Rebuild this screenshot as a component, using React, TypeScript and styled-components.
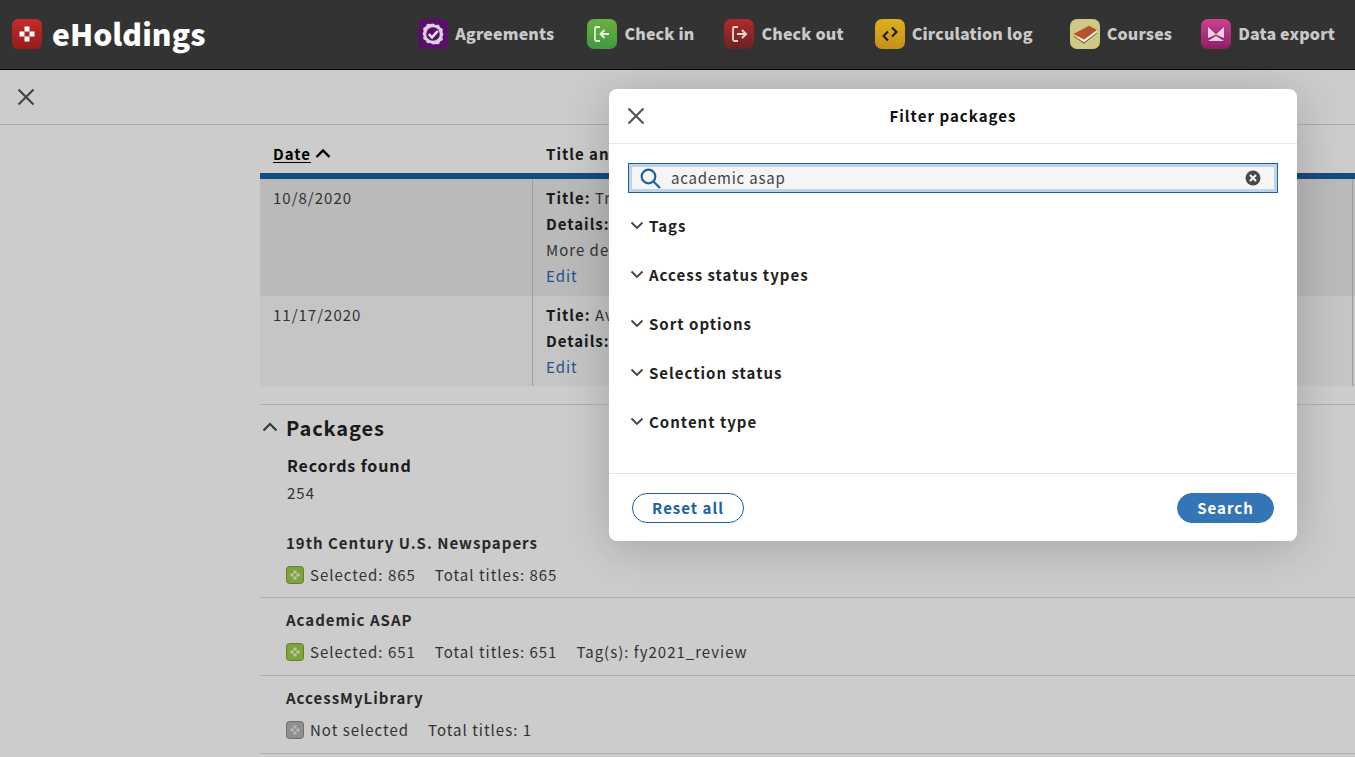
import React from "react";
import styled, { createGlobalStyle } from "styled-components";

const Global = createGlobalStyle`
  html, body { margin: 0; padding: 0; height: 100%; background: #fff; overflow: hidden; }
  body { font-family: "Noto Sans CJK JP", "Noto Sans", sans-serif; color: #333; }
  * { box-sizing: border-box; }
`;

const Screen = styled.div`
  position: relative;
  width: 1355px;
  height: 757px;
  overflow: hidden;
`;

const Header = styled.header`
  height: 70px;
  background: #333;
  border-bottom: 1px solid #000;
  display: flex;
  align-items: center;
  padding: 0 20px 1px 12px;
`;
const Brand = styled.div`
  display: flex;
  align-items: center;
  gap: 10px;
  color: #fff;
  font-weight: 900;
  font-size: 30px;
  letter-spacing: 0.05px;
  margin-right: auto;
  line-height: 30px;
`;
const BrandText = styled.span`
  position: relative;
  top: -1px;
`;
const Nav = styled.nav`
  display: flex;
  align-items: center;
`;
const NavItem = styled.div<{ $ml: number }>`
  display: flex;
  align-items: center;
  gap: 7px;
  margin-left: ${(p) => p.$ml}px;
  color: #c9c9c9;
  font-weight: 900;
  font-size: 16px;
  line-height: 30px;
  letter-spacing: 0.15px;
  white-space: nowrap;
`;
const NavLabel = styled.span`
  position: relative;
  top: -1px;
`;
const AppIcon = styled.svg`
  width: 30px;
  height: 30px;
  display: block;
  flex: none;
`;

const Page = styled.main`
  height: 687px;
`;
const PaneBar = styled.div`
  height: 55px;
  border-bottom: 1px solid #d8d8d8;
  display: flex;
  align-items: center;
  padding-left: 16px;
  padding-bottom: 1px;
`;
const Content = styled.div`
  padding-left: 260px;
`;
const TableHead = styled.div`
  display: grid;
  grid-template-columns: 273px 1fr;
  height: 54px;
  border-bottom: 6px solid #195f9f;
  align-items: center;
  font-weight: 700;
  font-size: 15px;
  letter-spacing: 1px;
  color: #222;
`;
const HeadCell = styled.div`
  display: flex;
  align-items: center;
  gap: 4px;
  padding-left: 13px;
  padding-top: 8px;
`;
const Sorted = styled.span`
  text-decoration: underline;
  text-underline-offset: 2px;
  color: #000;
`;
const Row = styled.div<{ $dark?: boolean; $pad: number }>`
  display: grid;
  grid-template-columns: 272px 1fr;
  background: ${(p) => (p.$dark ? "#e9e9e9" : "#f7f7f7")};
  font-size: 15px;
  line-height: 26px;
  letter-spacing: 1px;
  color: #3f3f3f;
  > div { padding: 6px 0 ${(p) => p.$pad}px 13px; }
`;
const DetailCell = styled.div`
  border-left: 1px solid #c4c4c4;
  border-right: 1px solid #c4c4c4;
  margin-right: 2px;
`;
const Line = styled.div``;
const Strong = styled.b`
  color: #222;
`;
const EditLink = styled.a`
  color: #2f6aa8;
  display: block;
`;

const Section = styled.section`
  margin-top: 18px;
  border-top: 1px solid #dcdcdc;
`;
const SectionTitle = styled.h2`
  margin: 0;
  display: flex;
  align-items: center;
  gap: 8px;
  height: 46px;
  padding: 0 0 2px 2px;
  font-size: 20px;
  font-weight: 700;
  letter-spacing: 0.9px;
  color: #222;
`;
const Records = styled.div`
  padding-left: 27px;
  font-size: 15px;
  letter-spacing: 1px;
  line-height: 27px;
  margin-top: 1px;
  color: #3f3f3f;
  b { display: block; font-size: 16px; letter-spacing: 0.88px; color: #222; }
`;
const PackageItem = styled.div`
  padding-left: 26px;
  height: 78px;
  border-bottom: 1px solid #dcdcdc;
  padding-top: 11px;
  letter-spacing: 1px;
  &:first-child { height: 77px; }
`;
const PackageList = styled.div`
  margin-top: 15px;
`;
const PackageName = styled.div`
  font-size: 15px;
  font-weight: 700;
  line-height: 22px;
  color: #333;
`;
const Meta = styled.div`
  display: flex;
  align-items: center;
  margin-top: 10px;
  font-size: 15px;
  line-height: 22px;
  color: #3f3f3f;
`;
const MetaText = styled.span`
  margin-left: 19px;
  &:first-of-type { margin-left: 6px; }
`;
const StatusIcon = styled.svg`
  width: 18px;
  height: 18px;
  display: block;
  flex: none;
`;

const Overlay = styled.div`
  position: absolute;
  left: 0;
  right: 0;
  top: 70px;
  bottom: 0;
  background: rgba(0, 0, 0, 0.2);
`;
const Modal = styled.div`
  position: absolute;
  left: 609px;
  top: 89px;
  width: 688px;
  height: 452px;
  background: #fff;
  border-radius: 8px;
  box-shadow: 0 6px 48px rgba(0, 0, 0, 0.2);
  display: flex;
  flex-direction: column;
`;
const ModalHead = styled.div`
  position: relative;
  height: 55px;
  flex: none;
  border-bottom: 1px solid #e5e5e5;
  display: flex;
  align-items: center;
  justify-content: center;
  padding-bottom: 2px;
  font-size: 15px;
  font-weight: 700;
  letter-spacing: 1.04px;
  color: #111;
`;
const ModalClose = styled.svg`
  position: absolute;
  left: 17px;
  top: 17px;
  width: 20px;
  height: 20px;
`;
const ModalBody = styled.div`
  flex: 1;
  padding: 19px 19px 0;
`;
const SearchBox = styled.div`
  height: 30px;
  border: 1px solid #1960a4;
  box-shadow: inset 0 0 0 3px #bdd3e8;
  background: #f5f5f5;
  display: flex;
  align-items: center;
  padding: 0 16px 0 11px;
  font-size: 15px;
  letter-spacing: 0.8px;
  color: #444;
`;
const SearchValue = styled.span`
  flex: 1;
  margin-left: 10px;
  position: relative;
  top: -1px;
`;
const Accordion = styled.div`
  margin-top: 9px;
`;
const AccordionRow = styled.div`
  height: 48.8px;
  display: flex;
  align-items: center;
  gap: 5px;
  padding-left: 2px;
  padding-bottom: 1px;
  font-size: 15px;
  font-weight: 700;
  letter-spacing: 1px;
  color: #222;
`;
const ModalFoot = styled.div`
  height: 68px;
  flex: none;
  border-top: 1px solid #e5e5e5;
  display: flex;
  align-items: flex-start;
  justify-content: space-between;
  padding: 19px 23px 0;
`;
const Pill = styled.button<{ $primary?: boolean }>`
  height: 30px;
  width: ${(p) => (p.$primary ? 97 : 112)}px;
  border-radius: 15px;
  border: 1px solid ${(p) => (p.$primary ? "#3476b5" : "#1960a4")};
  background: ${(p) => (p.$primary ? "#3476b5" : "#fff")};
  color: ${(p) => (p.$primary ? "#fff" : "#1960a4")};
  font-family: inherit;
  font-size: 15px;
  font-weight: 700;
  letter-spacing: 1px;
  padding: 0 0 2px;
  line-height: 1;
`;

const X = () => (
  <svg width="20" height="20" viewBox="0 0 20 20" fill="none" stroke="#555" strokeWidth="2.2">
    <path d="M2.500 2.500 17.500 17.500M17.500 2.500 2.500 17.500" />
  </svg>
);
const Chevron = () => (
  <svg width="14" height="9" viewBox="0 0 14 9" fill="none" stroke="#444" strokeWidth="1.8">
    <path d="M1.500 1.500 7 7l5.500-5.500" />
  </svg>
);
const BigChevron = () => (
  <svg width="16" height="10" viewBox="0 0 16 10" fill="none" stroke="#444" strokeWidth="2">
    <path d="M1.500 8.500 8 2l6.500 6.500" />
  </svg>
);
const Gradients = () => (
  <svg width="0" height="0" style={{ position: "absolute" }}>
    <defs>
      <linearGradient id="gRed" x1="0" y1="0" x2="0" y2="1"><stop offset="0" stopColor="#c62a2a" /><stop offset="1" stopColor="#961c1c" /></linearGradient>
      <linearGradient id="gGreen" x1="0" y1="0" x2="0" y2="1"><stop offset="0" stopColor="#6cb03f" /><stop offset="1" stopColor="#3f9a3f" /></linearGradient>
      <linearGradient id="gOut" x1="0" y1="0" x2="0" y2="1"><stop offset="0" stopColor="#b02a2a" /><stop offset="1" stopColor="#6e2222" /></linearGradient>
      <linearGradient id="gAmber" x1="0" y1="0" x2="0" y2="1"><stop offset="0" stopColor="#dbb020" /><stop offset="1" stopColor="#c88f1a" /></linearGradient>
      <linearGradient id="gPink" x1="0" y1="0" x2="0" y2="1"><stop offset="0" stopColor="#cb428f" /><stop offset="1" stopColor="#8f1e66" /></linearGradient>
    </defs>
  </svg>
);
const Logo = () => (
  <AppIcon viewBox="0 0 30 30">
    <rect width="30" height="30" rx="6" fill="url(#gRed)" />
    <g fill="#fff">
      <rect x="12.500" y="7.500" width="5" height="5" />
      <rect x="7.500" y="12.500" width="5" height="5" />
      <rect x="17.500" y="12.500" width="5" height="5" />
      <rect x="12.500" y="17.500" width="5" height="5" />
    </g>
  </AppIcon>
);
const Agreements = () => (
  <AppIcon viewBox="0 0 30 30">
    <rect width="30" height="30" rx="6" fill="#5a0f68" />
    <path d="M15 4.500l2.700 1.600 3.100-.4 1.400 2.800 2.700 1.600-.5 3.100L25.500 15l-1.100 2.800.5 3.100-2.700 1.600-1.400 2.800-3.100-.4L15 25.500l-2.700-1.600-3.100.4-1.400-2.800-2.700-1.600.5-3.100L4.500 15l1.100-2.800-.5-3.100 2.700-1.600 1.400-2.800 3.100.4z" fill="#dccfe0" />
    <circle cx="15" cy="15" r="6.800" fill="#5a0f68" />
    <path d="M10.800 15.200l3.200 3.200 5.800-6.400" fill="none" stroke="#f2ecf3" strokeWidth="2.400" />
  </AppIcon>
);
const CheckIn = () => (
  <AppIcon viewBox="0 0 30 30">
    <rect width="30" height="30" rx="7" fill="url(#gGreen)" />
    <path d="M13 8H9.500Q8 8 8 9.500v11Q8 22 9.500 22H13" fill="none" stroke="#e5efdf" strokeWidth="1.800" />
    <path d="M22 15h-8M17.500 11l-4 4 4 4" fill="none" stroke="#e5efdf" strokeWidth="2" />
  </AppIcon>
);
const CheckOut = () => (
  <AppIcon viewBox="0 0 30 30">
    <rect width="30" height="30" rx="7" fill="url(#gOut)" />
    <path d="M14 8h-3.500Q9 8 9 9.500v11Q9 22 10.500 22H14" fill="none" stroke="#e8d6d6" strokeWidth="1.800" />
    <path d="M13 15h9M18 11l4 4-4 4" fill="none" stroke="#e8d6d6" strokeWidth="2" />
  </AppIcon>
);
const Circ = () => (
  <AppIcon viewBox="0 0 30 30">
    <rect width="30" height="30" rx="7" fill="url(#gAmber)" />
    <path d="M13 12.500 8.500 17l4.500 4.500M17 8.500l4.500 4.500-4.500 4.500" fill="none" stroke="#1c1608" strokeWidth="2" />
  </AppIcon>
);
const Courses = () => (
  <AppIcon viewBox="0 0 30 30">
    <rect width="30" height="30" rx="7" fill="#cfc985" />
    <path d="M3.500 16 14 23.300l13-9.800V11L14 20z" fill="#f3efe0" />
    <path d="M3.500 15 19 6.700l8 4.300-13 9.500z" fill="#b5532b" />
    <path d="M3.500 16.500 14 23.600l13-10v1L14 24.800 3.500 17.500z" fill="#7d5a46" />
  </AppIcon>
);
const DataExport = () => (
  <AppIcon viewBox="0 0 30 30">
    <rect width="30" height="30" rx="7" fill="url(#gPink)" />
    <path d="M7 8l8 7.500L23 8v11l-8-3.500L7 19z" fill="#ecd3e2" />
    <path d="M7 22l8-5 8 5z" fill="#ecd3e2" />
  </AppIcon>
);
const Status = ({ on }: { on?: boolean }) => (
  <StatusIcon viewBox="0 0 18 18">
    <rect x=".5" y=".5" width="17" height="17" rx="3" fill={on ? "#9ecc49" : "#b3b3b3"} stroke={on ? "#77a330" : "#8c8c8c"} />
    <g fill={on ? "#f0f7df" : "#e6e6e6"}>
      <rect x="7.500" y="4.500" width="3" height="3" />
      <rect x="4.500" y="7.500" width="3" height="3" />
      <rect x="10.500" y="7.500" width="3" height="3" />
      <rect x="7.500" y="10.500" width="3" height="3" />
    </g>
  </StatusIcon>
);

const navItems: { label: string; ml: number; icon: React.ReactNode }[] = [
  { label: "Agreements", ml: 0, icon: <Agreements /> },
  { label: "Check in", ml: 33, icon: <CheckIn /> },
  { label: "Check out", ml: 30, icon: <CheckOut /> },
  { label: "Circulation log", ml: 31, icon: <Circ /> },
  { label: "Courses", ml: 37, icon: <Courses /> },
  { label: "Data export", ml: 29, icon: <DataExport /> },
];
const packages = [
  { name: "19th Century U.S. Newspapers", on: true, parts: ["Selected: 865", "Total titles: 865"] },
  { name: "Academic ASAP", on: true, parts: ["Selected: 651", "Total titles: 651", "Tag(s): fy2021_review"] },
  { name: "AccessMyLibrary", on: false, parts: ["Not selected", "Total titles: 1"] },
];
const filters = ["Tags", "Access status types", "Sort options", "Selection status", "Content type"];

export default function App() {
  return (
    <Screen>
      <Global />
      <Gradients />
      <Header>
        <Brand>
          <Logo />
          <BrandText>eHoldings</BrandText>
        </Brand>
        <Nav>
          {navItems.map((n) => (
            <NavItem key={n.label} $ml={n.ml}>
              {n.icon}
              <NavLabel>{n.label}</NavLabel>
            </NavItem>
          ))}
        </Nav>
      </Header>
      <Page>
        <PaneBar>
          <X />
        </PaneBar>
        <Content>
          <TableHead>
            <HeadCell>
              <Sorted>Date</Sorted>
              <svg width="16" height="11" viewBox="0 0 16 11" fill="none" stroke="#000" strokeWidth="2.400">
                <path d="M1.500 9 8 2.500 14.500 9" />
              </svg>
            </HeadCell>
            <HeadCell>Title and</HeadCell>
          </TableHead>
          <Row $dark $pad={7}>
            <Line>10/8/2020</Line>
            <DetailCell>
              <Line><Strong>Title:</Strong> Trial</Line>
              <Line><Strong>Details:</Strong></Line>
              <Line>More details</Line>
              <EditLink>Edit</EditLink>
            </DetailCell>
          </Row>
          <Row $pad={6}>
            <Line>11/17/2020</Line>
            <DetailCell>
              <Line><Strong>Title:</Strong> Avail</Line>
              <Line><Strong>Details:</Strong></Line>
              <EditLink>Edit</EditLink>
            </DetailCell>
          </Row>
          <Section>
            <SectionTitle>
              <BigChevron />
              Packages
            </SectionTitle>
            <Records>
              <b>Records found</b>
              254
            </Records>
            <PackageList>
              {packages.map((p) => (
                <PackageItem key={p.name}>
                  <PackageName>{p.name}</PackageName>
                  <Meta>
                    <Status on={p.on} />
                    {p.parts.map((t) => (
                      <MetaText key={t}>{t}</MetaText>
                    ))}
                  </Meta>
                </PackageItem>
              ))}
            </PackageList>
          </Section>
        </Content>
      </Page>
      <Overlay />
      <Modal>
        <ModalHead>
          <ModalClose viewBox="0 0 20 20" fill="none" stroke="#555" strokeWidth="2.200">
            <path d="M2.500 2.500 17.500 17.500M17.500 2.500 2.500 17.500" />
          </ModalClose>
          Filter packages
        </ModalHead>
        <ModalBody>
          <SearchBox>
            <svg width="21" height="21" viewBox="0 0 21 21" fill="none" stroke="#1960a4" strokeWidth="2.200">
              <circle cx="8.500" cy="8.500" r="6.800" />
              <path d="M13.500 13.500 20 20" />
            </svg>
            <SearchValue>academic asap</SearchValue>
            <svg width="16" height="16" viewBox="0 0 16 16">
              <circle cx="8" cy="8" r="7.500" fill="#4a4a4a" />
              <path d="M5 5l6 6M11 5l-6 6" stroke="#fff" strokeWidth="2" />
            </svg>
          </SearchBox>
          <Accordion>
            {filters.map((f) => (
              <AccordionRow key={f}>
                <Chevron />
                {f}
              </AccordionRow>
            ))}
          </Accordion>
        </ModalBody>
        <ModalFoot>
          <Pill>Reset all</Pill>
          <Pill $primary>Search</Pill>
        </ModalFoot>
      </Modal>
    </Screen>
  );
}
